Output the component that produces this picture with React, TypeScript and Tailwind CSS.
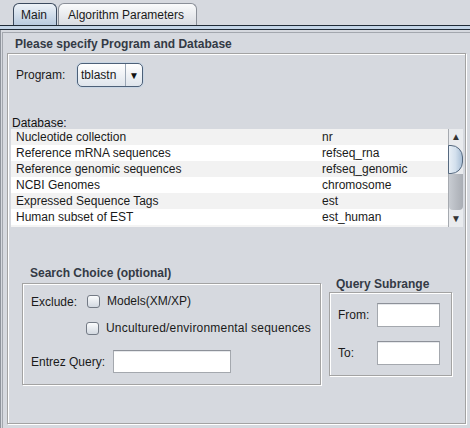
const rows: [string, string][] = [
  ["Nucleotide collection", "nr"],
  ["Reference mRNA sequences", "refseq_rna"],
  ["Reference genomic sequences", "refseq_genomic"],
  ["NCBI Genomes", "chromosome"],
  ["Expressed Sequence Tags", "est"],
  ["Human subset of EST", "est_human"],
];

function CheckBox() {
  return (
    <div className="w-[13px] h-[13px] shrink-0 rounded-[3px] border border-[#737a85] bg-gradient-to-b from-[#fbfcfd] to-[#d3d9e1]" />
  );
}

function TextField({ w, h }: { w: string; h: string }) {
  return (
    <div
      className={`${w} ${h} shrink-0 bg-white border border-[#a4a8ae] border-t-[#8d9199] shadow-[inset_0_1px_0_#e6e8eb]`}
    />
  );
}

function ScrollBar() {
  return (
    <div className="w-[15px] h-full border-l border-[#a6aab0] bg-[#e9ebee] flex flex-col">
      <div className="h-[16px] flex items-center justify-center text-[10px] leading-none text-[#333]">▲</div>
      <div className="h-[29px] -ml-[1px] rounded-r-[12px] border border-[#56697f] bg-gradient-to-r from-[#e8eff6] via-[#d3e0ed] to-[#a9bfd6]" />
      <div className="h-[36px] bg-gradient-to-r from-[#c8ccd2] to-[#a9adb4] rounded-b-[4px]" />
      <div className="flex-1 flex items-end justify-center pb-[3px] text-[10px] leading-none text-[#333]">▼</div>
    </div>
  );
}

export default function App() {
  return (
    <div
      className="w-[470px] h-[428px] bg-[#d6d9df] overflow-hidden flex flex-col text-[12px] text-[#1a1a1a]"
      style={{ fontFamily: '"Liberation Sans", Arial, sans-serif' }}
    >
      {/* tabs */}
      <div className="h-[25px] flex items-end pl-[13px] gap-[1px]">
        <div className="h-[22px] w-[44px] rounded-t-[6px] border border-b-0 border-[#3b4a5e] bg-gradient-to-b from-[#eef3f8] to-[#b8cadf] flex items-center pl-[7px]">
          Main
        </div>
        <div className="h-[22px] w-[139px] rounded-t-[6px] border border-b-0 border-[#8a8f98] bg-gradient-to-b from-[#fafbfc] to-[#d9dce2] flex items-center pl-[9px]">
          Algorithm Parameters
        </div>
      </div>
      <div className="h-[5px] border-y border-[#1f2a36] bg-[#c3d4e6]" />

      <div className="flex-1 border-l border-[#8f949c] pl-[1px] pt-[2px] flex flex-col">
        <div className="flex-1 border-l border-t border-[#a3a7ae] pl-[4px] pr-[4px] pb-[4px] flex flex-col">
          <div className="h-[20px] pt-[4px] pl-[8px] font-bold text-[#333a45] leading-[14px]">
            Please specify Program and Database
          </div>

          <div className="flex-1 border border-[#a3a3a3] shadow-[inset_1px_1px_0_#ffffff,1px_1px_0_#ffffff] flex flex-col">
            {/* program */}
            <div className="mt-[9px] h-[24px] pl-[8px] flex items-center">
              <span className="w-[61px]">Program:</span>
              <div className="w-[66px] h-[24px] rounded-[5px] border border-[#4d6078] bg-gradient-to-b from-[#ffffff] to-[#dfe5ec] flex items-center shadow-[0_0_0_1px_#c9d6e4]">
                <span className="flex-1 pl-[3px]">tblastn</span>
                <div className="w-[17px] h-full border-l border-[#9aa6b4] flex items-center justify-center text-[10px] text-[#111]">
                  ▼
                </div>
              </div>
            </div>

            {/* database */}
            <div className="mt-[29px] h-[13px] pl-[4px] leading-[14px] text-[#111]">Database:</div>
            <div className="ml-[3px] w-[452px] h-[98px] flex">
              <div className="flex-1 bg-[#f4f4f4]">
                {rows.map(([name, code], i) => (
                  <div
                    key={code}
                    className={`h-[16px] flex items-center ${i % 2 === 0 ? "bg-[#f2f2f2]" : "bg-white"}`}
                  >
                    <span className="w-[306px] pl-[5px]">{name}</span>
                    <span className="pl-[5px]">{code}</span>
                  </div>
                ))}
              </div>
              <ScrollBar />
            </div>

            {/* bottom panels */}
            <div className="mt-[39px] flex items-start">
              <div className="ml-[14px] flex flex-col">
                <div className="h-[14px] leading-[14px] pl-[8px] font-bold text-[#333a45]">
                  Search Choice (optional)
                </div>
                <div className="mt-[3px] w-[299px] h-[102px] border border-[#a3a3a3] shadow-[inset_1px_1px_0_#ffffff,1px_1px_0_#ffffff] pl-[8px] flex flex-col">
                  <div className="mt-[11px] h-[14px] flex items-start">
                    <span className="w-[56px] leading-[14px]">Exclude:</span>
                    <CheckBox />
                    <span className="ml-[7px] leading-[13px]">Models(XM/XP)</span>
                  </div>
                  <div className="mt-[13px] h-[14px] flex items-start pl-[55px]">
                    <CheckBox />
                    <span className="ml-[7px] leading-[13px] tracking-[0.2px]">Uncultured/environmental sequences</span>
                  </div>
                  <div className="mt-[14px] flex items-center">
                    <span className="w-[82px]">Entrez Query:</span>
                    <TextField w="w-[118px]" h="h-[23px]" />
                  </div>
                </div>
              </div>

              <div className="ml-[8px] mt-[11px] flex flex-col">
                <div className="h-[14px] leading-[14px] pl-[7px] font-bold text-[#333a45]">Query Subrange</div>
                <div className="mt-[1px] w-[123px] h-[84px] border border-[#a3a3a3] shadow-[inset_1px_1px_0_#ffffff,1px_1px_0_#ffffff] pl-[8px] flex flex-col">
                  <div className="mt-[10px] flex items-center">
                    <span className="w-[39px]">From:</span>
                    <TextField w="w-[63px]" h="h-[24px]" />
                  </div>
                  <div className="mt-[14px] flex items-center">
                    <span className="w-[39px]">To:</span>
                    <TextField w="w-[63px]" h="h-[24px]" />
                  </div>
                </div>
              </div>
            </div>
          </div>
        </div>
      </div>
    </div>
  );
}
